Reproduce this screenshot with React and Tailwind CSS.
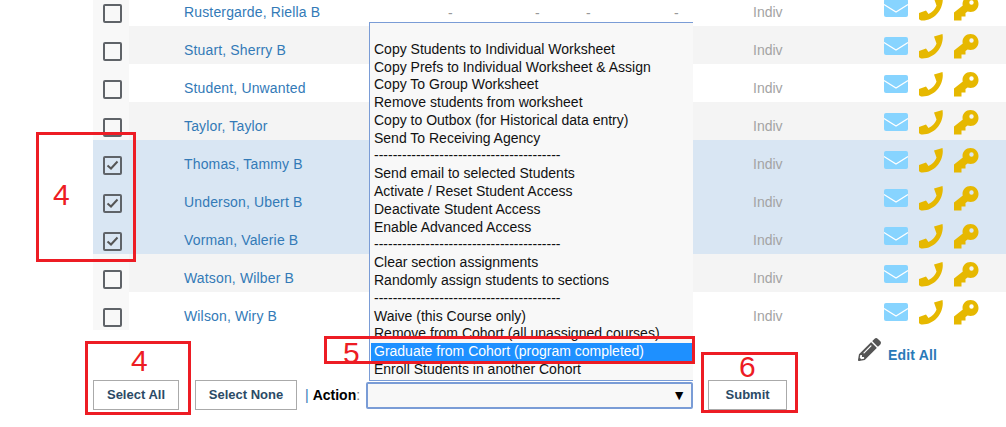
import { FaPencilAlt } from "react-icons/fa";

const students = [
  { name: "Rustergarde, Riella B" },
  { name: "Stuart, Sherry B" },
  { name: "Student, Unwanted" },
  { name: "Taylor, Taylor" },
  { name: "Thomas, Tammy B", checked: true },
  { name: "Underson, Ubert B", checked: true },
  { name: "Vorman, Valerie B", checked: true },
  { name: "Watson, Wilber B" },
  { name: "Wilson, Wiry B" },
];

const divider = "----------------------------------------";

const actions = [
  "\u00a0",
  "Copy Students to Individual Worksheet",
  "Copy Prefs to Individual Worksheet & Assign",
  "Copy To Group Worksheet",
  "Remove students from worksheet",
  "Copy to Outbox (for Historical data entry)",
  "Send To Receiving Agency",
  divider,
  "Send email to selected Students",
  "Activate / Reset Student Access",
  "Deactivate Student Access",
  "Enable Advanced Access",
  divider,
  "Clear section assignments",
  "Randomly assign students to sections",
  divider,
  "Waive (this Course only)",
  "Remove from Cohort (all unassigned courses)",
  "Graduate from Cohort (program completed)",
  "Enroll Students in another Cohort",
];

function MailIcon() {
  return (
    <svg width="24" height="18" viewBox="0 0 24 18">
      <rect width="24" height="18" rx="2" fill="#87d4ff" />
      <path d="M0 5.5 L12 13 L24 5.5" fill="none" stroke="#fff" strokeWidth="1.2" />
    </svg>
  );
}

function PhoneIcon() {
  return (
    <svg width="24" height="25" viewBox="0 0 24 25">
      <path
        d="M15 2.5 L23.5 0 C25.5 11 17 24.5 3.5 24.5 C1.5 24.5 0.3 23.8 0 23 L0 17 L7 14.5 L9.5 18 C13 16.5 16.5 13 17.5 9.5 Z"
        fill="#e6b800"
      />
    </svg>
  );
}

function KeyIcon() {
  return (
    <svg width="25" height="25" viewBox="0 0 25 25">
      <path
        fillRule="evenodd"
        d="M16.5 0 C21 0 24.5 3.5 24.5 8 C24.5 12.5 21 16 16.5 16 C15.5 16 14.5 15.8 13.6 15.5 L11.5 17 L11.5 20.5 L7.5 20.5 L7.5 24.5 L0 24.5 L0 16.5 L8.8 9.5 C8.6 9 8.5 8.5 8.5 8 C8.5 3.5 12 0 16.5 0 Z M17.5 4.3 A2.2 2.2 0 1 0 17.5 8.7 A2.2 2.2 0 1 0 17.5 4.3 Z"
        fill="#e6b800"
      />
    </svg>
  );
}

function Checkbox({ checked }) {
  return (
    <span className="flex h-[19px] w-[19px] items-center justify-center rounded-[2px] border-2 border-[#5f6368] bg-transparent">
      {checked && (
        <svg width="13" height="11" viewBox="0 0 13 11">
          <path d="M1.5 5.5 L5 8.5 L11.5 1.5" fill="none" stroke="#555" strokeWidth="2" />
        </svg>
      )}
    </span>
  );
}

function StudentRow({ student, index }) {
  let rowBg = index % 2 === 0 ? "bg-white" : "bg-[#f4f4f4]";
  let boxBg = "bg-[#f8f8f8]";
  if (student.checked) {
    rowBg = "bg-[#d9e6f3]";
    boxBg = "bg-[#d9e6f3]";
  }

  // only the first row's counts stick out above the open dropdown
  const showCounts = index === 0;

  return (
    <div className={`flex h-[38px] items-center ${rowBg}`}>
      <div className={`flex h-full w-[36px] items-center justify-center pl-[3px] pt-[13px] ${boxBg}`}>
        <Checkbox checked={student.checked} />
      </div>
      <a className="w-[319px] pl-[55px] pt-[10px] text-[14px] tracking-[0.15px] text-[#337ab7]">{student.name}</a>
      <span className="w-[87px] pt-[13px] text-[14px] text-[#999]">{showCounts && "-"}</span>
      <span className="w-[51px] pt-[13px] text-[14px] text-[#999]">{showCounts && "-"}</span>
      <span className="w-[88px] pt-[13px] text-[14px] text-[#999]">{showCounts && "-"}</span>
      <span className="w-[79px] pt-[13px] text-[14px] text-[#999]">{showCounts && "-"}</span>
      <span className="w-[131px] pt-[10px] text-[14px] text-[#a3a3a3]">Indiv</span>
      <div className="flex items-center gap-[11px] pt-[2px]">
        <MailIcon />
        <PhoneIcon />
        <KeyIcon />
      </div>
    </div>
  );
}

function FooterButton({ label, className }) {
  return (
    <button
      type="button"
      className={`h-[30px] border border-[#aaa] bg-white text-[13px] font-bold text-[#2b4a66] ${className}`}
    >
      {label}
    </button>
  );
}

function Callout({ className, label, labelClass }) {
  return (
    <div className={`absolute border-[3px] border-[#ed1c24] ${className}`}>
      <span className={`absolute text-[30px] leading-none text-[#ed1c24] ${labelClass}`}>{label}</span>
    </div>
  );
}

export default function App() {
  return (
    <div className="relative h-[427px] w-[1006px] overflow-hidden bg-white font-['Liberation_Sans',Arial,sans-serif]">
      <div className="-mt-[12px] ml-[93px]">
        {students.map((student, index) => (
          <StudentRow key={student.name} student={student} index={index} />
        ))}
      </div>

      <div className="flex h-[50px] justify-end pr-[69px] pt-[8px]">
        <a className="flex items-start gap-[7px] text-[14px] font-bold tracking-[0.15px] text-[#2a7ab8]">
          <FaPencilAlt size={23} color="#555" />
          <span className="pt-[7px]">Edit All</span>
        </a>
      </div>

      <div className="ml-[93px] flex items-center">
        <FooterButton label="Select All" className="w-[86px]" />
        <FooterButton label="Select None" className="ml-[16px] w-[102px]" />
        <span className="ml-[8px] text-[14px] text-[#337ab7]">|</span>
        <span className="ml-[4px] text-[14px] font-bold text-black">Action</span>
        <span className="text-[14px] text-[#777]">:</span>
        <div className="ml-[6px] flex h-[27px] w-[327px] items-center justify-end rounded-[2px] border-2 border-[#7a9cd6] bg-[#f8f8f8] pr-[5px] text-[14px] text-black">
          ▼
        </div>
        <FooterButton label="Submit" className="ml-[15px] w-[79px]" />
      </div>

      <div className="absolute left-[369px] top-[22px] h-[359px] w-[324px] overflow-hidden border border-r-0 border-[#7a9cd6] bg-[#f8f8f8] pl-[1px] text-[14px] leading-[17.78px] text-[#111]">
        {actions.map((action, index) =>
          action.startsWith("Graduate") ? (
            <div key={index} className="bg-[#1e90ff] px-[3px] text-white">
              {action}
            </div>
          ) : (
            <div key={index} className="whitespace-nowrap px-[3px]">
              {action}
            </div>
          ),
        )}
      </div>

      <Callout className="left-[36px] top-[132px] h-[130px] w-[100px]" label="4" labelClass="left-[14px] top-[45px]" />
      <Callout className="left-[85px] top-[341px] h-[74px] w-[106px]" label="4" labelClass="left-[43px] top-[2px]" />
      <Callout className="left-[324px] top-[336px] h-[28px] w-[371px]" label="5" labelClass="left-[16px] top-[-1px]" />
      <Callout className="left-[701px] top-[352px] h-[61px] w-[97px]" label="6" labelClass="left-[35px] top-[-3px]" />
    </div>
  );
}
